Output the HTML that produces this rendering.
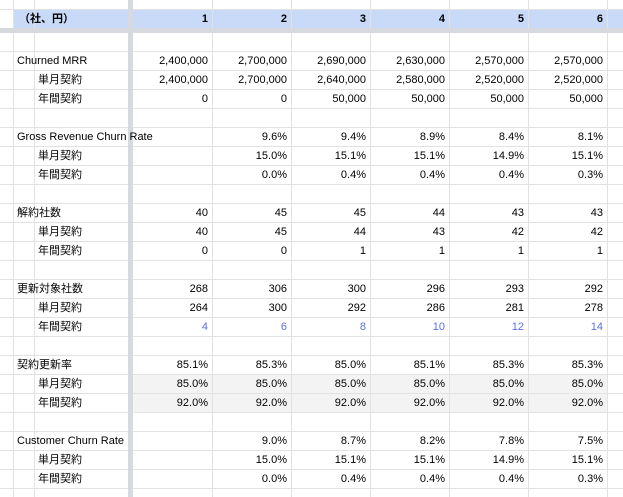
<!DOCTYPE html>
<html><head><meta charset="utf-8"><style>
body{margin:0;width:623px;height:497px;overflow:hidden;background:#fff;font-family:"Liberation Sans","Noto Sans CJK JP",sans-serif;font-size:11px;color:#000;position:relative}
.v{position:absolute;top:0;width:1px;height:497px;background:#e2e2e2}
.h{position:absolute;left:0;width:623px;height:1px;background:#e2e2e2}
.r{position:absolute;left:0;width:623px;height:19px;line-height:19px}
.r span{position:absolute;white-space:nowrap}
.n{text-align:right;width:75px}
</style></head><body>
<div style="position:absolute;left:13px;top:9px;width:610px;height:19px;background:#c9daf8"></div>
<div style="position:absolute;left:133px;top:374px;width:474px;height:38px;background:#f3f3f3"></div>
<div id="g"></div>
<div style="position:absolute;left:0;top:28px;width:623px;height:5px;background:#d6d9de"></div>
<div style="position:absolute;left:128px;top:0;width:5px;height:497px;background:#d6d9de"></div>
<div id="t"></div>
<script>
var g='';
[13,34,212,291,370,449,528,607].forEach(function(x){g+='<div class="v" style="left:'+x+'px"></div>';});
g+='<div class="h" style="top:9px"></div>';
for(var y=51;y<497;y+=19)g+='<div class="h" style="top:'+y+'px"></div>';
document.getElementById('g').innerHTML=g;
var cols=[133,212,291,370,449,528];
var rows=[
['m','Churned MRR',['2,400,000','2,700,000','2,690,000','2,630,000','2,570,000','2,570,000']],
['s','単月契約',['2,400,000','2,700,000','2,640,000','2,580,000','2,520,000','2,520,000']],
['s','年間契約',['0','0','50,000','50,000','50,000','50,000']],
null,
['m','Gross Revenue Churn Rate',['','9.6%','9.4%','8.9%','8.4%','8.1%']],
['s','単月契約',['','15.0%','15.1%','15.1%','14.9%','15.1%']],
['s','年間契約',['','0.0%','0.4%','0.4%','0.4%','0.3%']],
null,
['m','解約社数',['40','45','45','44','43','43']],
['s','単月契約',['40','45','44','43','42','42']],
['s','年間契約',['0','0','1','1','1','1']],
null,
['m','更新対象社数',['268','306','300','296','293','292']],
['s','単月契約',['264','300','292','286','281','278']],
['b','年間契約',['4','6','8','10','12','14']],
null,
['m','契約更新率',['85.1%','85.3%','85.0%','85.1%','85.3%','85.3%']],
['s','単月契約',['85.0%','85.0%','85.0%','85.0%','85.0%','85.0%']],
['s','年間契約',['92.0%','92.0%','92.0%','92.0%','92.0%','92.0%']],
null,
['c','Customer Churn Rate',['','9.0%','8.7%','8.2%','7.8%','7.5%']],
['s','単月契約',['','15.0%','15.1%','15.1%','14.9%','15.1%']],
['s','年間契約',['','0.0%','0.4%','0.4%','0.4%','0.3%']]
];
var t='<div class="r" style="top:9px;height:19px;line-height:20px;font-weight:bold"><span style="left:19px">（社、円）</span>';
for(var i=0;i<6;i++)t+='<span class="n" style="left:'+cols[i]+'px">'+(i+1)+'</span>';
t+='</div>';
rows.forEach(function(r,k){if(!r)return;var y=52+19*k;
t+='<div class="r" style="top:'+y+'px">';
if(r[0]=='c')t+='<span style="left:17px;width:115px;overflow:hidden">'+r[1]+'</span>';
else t+='<span style="left:'+(r[0]=='m'?17:38)+'px">'+r[1]+'</span>';
for(var i=0;i<6;i++)t+='<span class="n" style="left:'+cols[i]+'px;'+(r[0]=='b'?'color:#5b6fe6':'')+'">'+r[2][i]+'</span>';
t+='</div>';});
document.getElementById('t').innerHTML=t;
</script>
</body></html>
